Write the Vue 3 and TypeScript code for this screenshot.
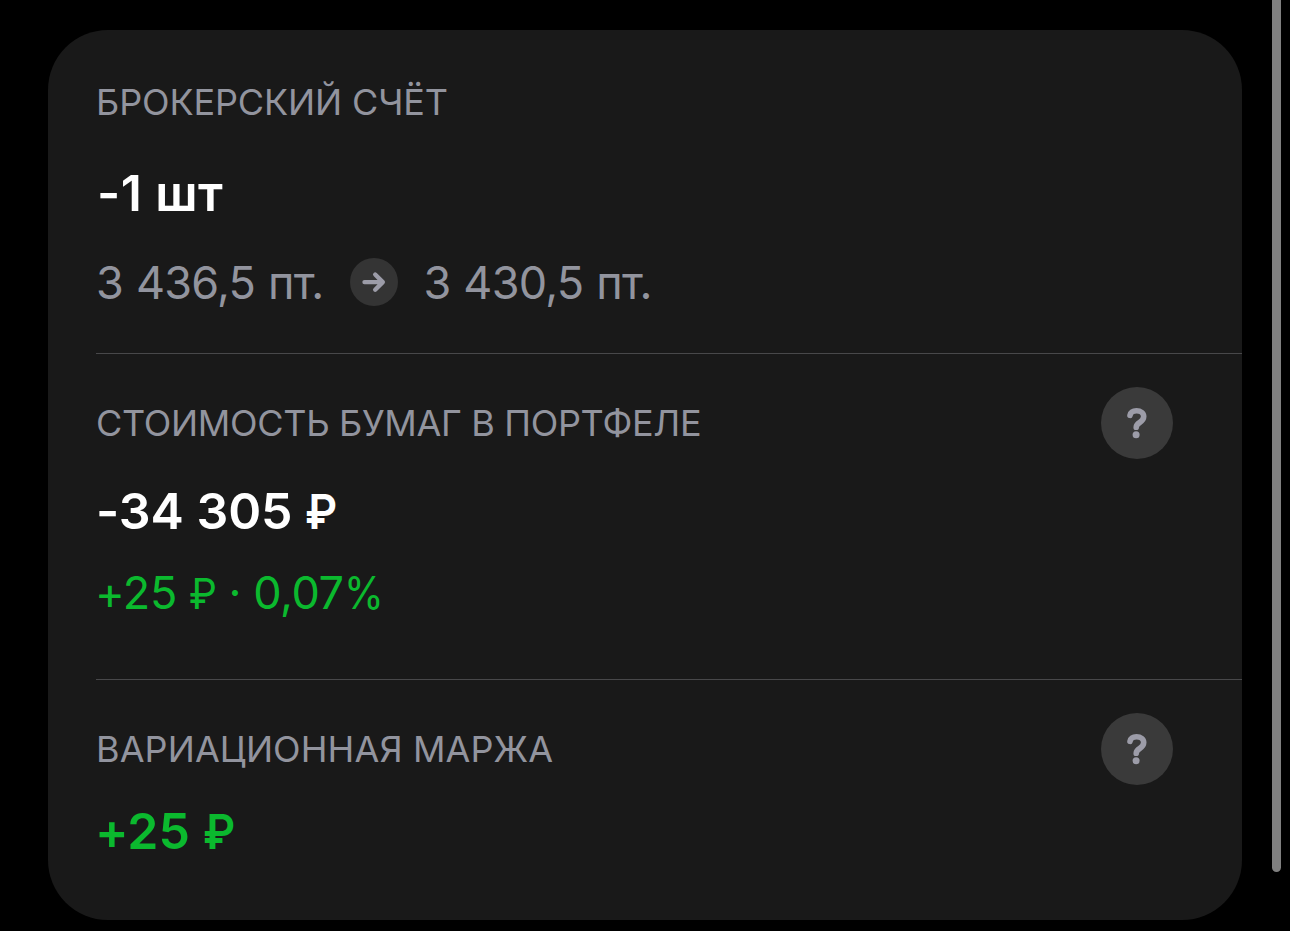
<script setup lang="ts">
interface Section { title: string; value: string; positive?: boolean; change?: string; help?: boolean }
const sections: Section[] = [
  { title: 'БРОКЕРСКИЙ СЧЁТ', value: '-1 шт' },
  { title: 'СТОИМОСТЬ БУМАГ В ПОРТФЕЛЕ', value: '-34 305 ₽', change: '+25 ₽ · 0,07%', help: true },
  { title: 'ВАРИАЦИОННАЯ МАРЖА', value: '+25 ₽', positive: true, help: true },
]
// Keeps the currency and percent signs apart so they can be set slightly narrower.
const parts = (text: string): string[] => text.split(/([₽%])/).filter(Boolean)
const partClass = (part: string) => ({ ruble: part === '₽', percent: part === '%' })
</script>

<template>
  <main class="screen">
    <div class="card">
      <section v-for="(s, i) in sections" :key="s.title" class="section" :class="`s${i}`">
        <header class="head">
          <h2 class="title">{{ s.title }}</h2>
          <button v-if="s.help" class="help" aria-label="Справка">
            <svg width="72" height="72" viewBox="0 0 72 72" fill="none">
              <path d="M29 28.300C29.700 25.200 32.100 23.800 35.500 23.800C39.800 23.800 42.700 26 42.700 29.600C42.700 32.300 41.300 33.900 38.700 35.500C36.300 37 35.300 38.100 35.200 40.300" stroke="#9c9ca8" stroke-width="5.600" stroke-linecap="round" stroke-linejoin="round" />
              <circle cx="35.100" cy="47.800" r="3.500" fill="#9c9ca8" />
            </svg>
          </button>
        </header>
        <div class="value" :class="{ positive: s.positive }"><span v-for="(p, k) in parts(s.value)" :key="k" :class="partClass(p)">{{ p }}</span></div>
        <div v-if="i === 0" class="prices">
          <span class="price">3 436,5 пт.</span>
          <svg class="arrow" width="48" height="48" viewBox="0 0 48 48" fill="none">
            <circle cx="24" cy="24" r="24" fill="#343434" />
            <path d="M14.500 24.100H32.500M25.200 16.500L32.800 24.100L25.200 31.700" stroke="#9c9ca8" stroke-width="4.400" stroke-linecap="round" stroke-linejoin="round" />
          </svg>
          <span class="price">3 430,5 пт.</span>
        </div>
        <div v-if="s.change" class="change"><span v-for="(p, k) in parts(s.change)" :key="k" :class="partClass(p)">{{ p }}</span></div>
      </section>
    </div>
    <div class="scrollbar"></div>
  </main>
</template>

<style>
body { margin: 0; background: #000; overflow: hidden; }
</style>
<style scoped>
.screen { position: relative; box-sizing: border-box; width: 1290px; height: 931px; padding: 30px 48px 11px; background: #000; font-family: Inter, "Liberation Sans", sans-serif; font-feature-settings: "calt" 0; overflow: hidden; }
.card { box-sizing: border-box; height: 890px; border-radius: 60px; background: #191919; padding-left: 48px; overflow: hidden; }
.section { box-sizing: border-box; }
.s0 { height: 324px; padding-top: 36px; border-bottom: 1px solid #48484a; }
.s1 { height: 326px; padding-top: 33px; border-bottom: 1px solid #48484a; }
.s2 { padding-top: 33px; }
.head { display: flex; align-items: center; justify-content: space-between; height: 72px; padding-right: 69px; }
.title { margin: 0; font-size: 36px; line-height: 44px; font-weight: 400; color: #92949e; white-space: nowrap; }
.s0 .title { letter-spacing: -0.13px; }
.s1 .title { letter-spacing: -0.32px; }
.s2 .title { letter-spacing: 0.1px; }
.help { width: 72px; height: 72px; padding: 0; border: 0; border-radius: 50%; background: #3a3a3a; }
.help svg { display: block; }
.value { height: 60px; line-height: 60px; font-size: 50px; font-weight: 600; color: #fff; white-space: pre; }
.s0 .value { margin-top: 25px; padding-left: 1px; letter-spacing: 0.4px; }
.s1 .value { margin-top: 22px; letter-spacing: -0.05px; }
.s2 .value { margin-top: 16px; margin-left: -1px; }
.value.positive { color: #0bb92e; }
.prices { display: flex; align-items: center; height: 56px; margin-top: 31px; }
.price { padding-top: 2px; font-size: 45px; line-height: 54px; letter-spacing: -0.75px; word-spacing: 1px; color: #92949e; white-space: nowrap; }
.arrow { margin: 0 25px 0 27px; flex: none; }
.change { height: 56px; margin-top: 24px; margin-left: -1px; font-size: 45px; line-height: 56px; letter-spacing: -0.4px; color: #0bb92e; white-space: pre; }
.ruble { display: inline-block; font-size: 0.95em; transform: scaleX(0.93); transform-origin: left; margin-right: -0.06em; }
.percent { display: inline-block; transform: scaleX(0.9); transform-origin: left; }
.scrollbar { position: absolute; top: -10px; left: 1272px; width: 9px; height: 882px; border-radius: 5px; background: #808080; }
</style>
